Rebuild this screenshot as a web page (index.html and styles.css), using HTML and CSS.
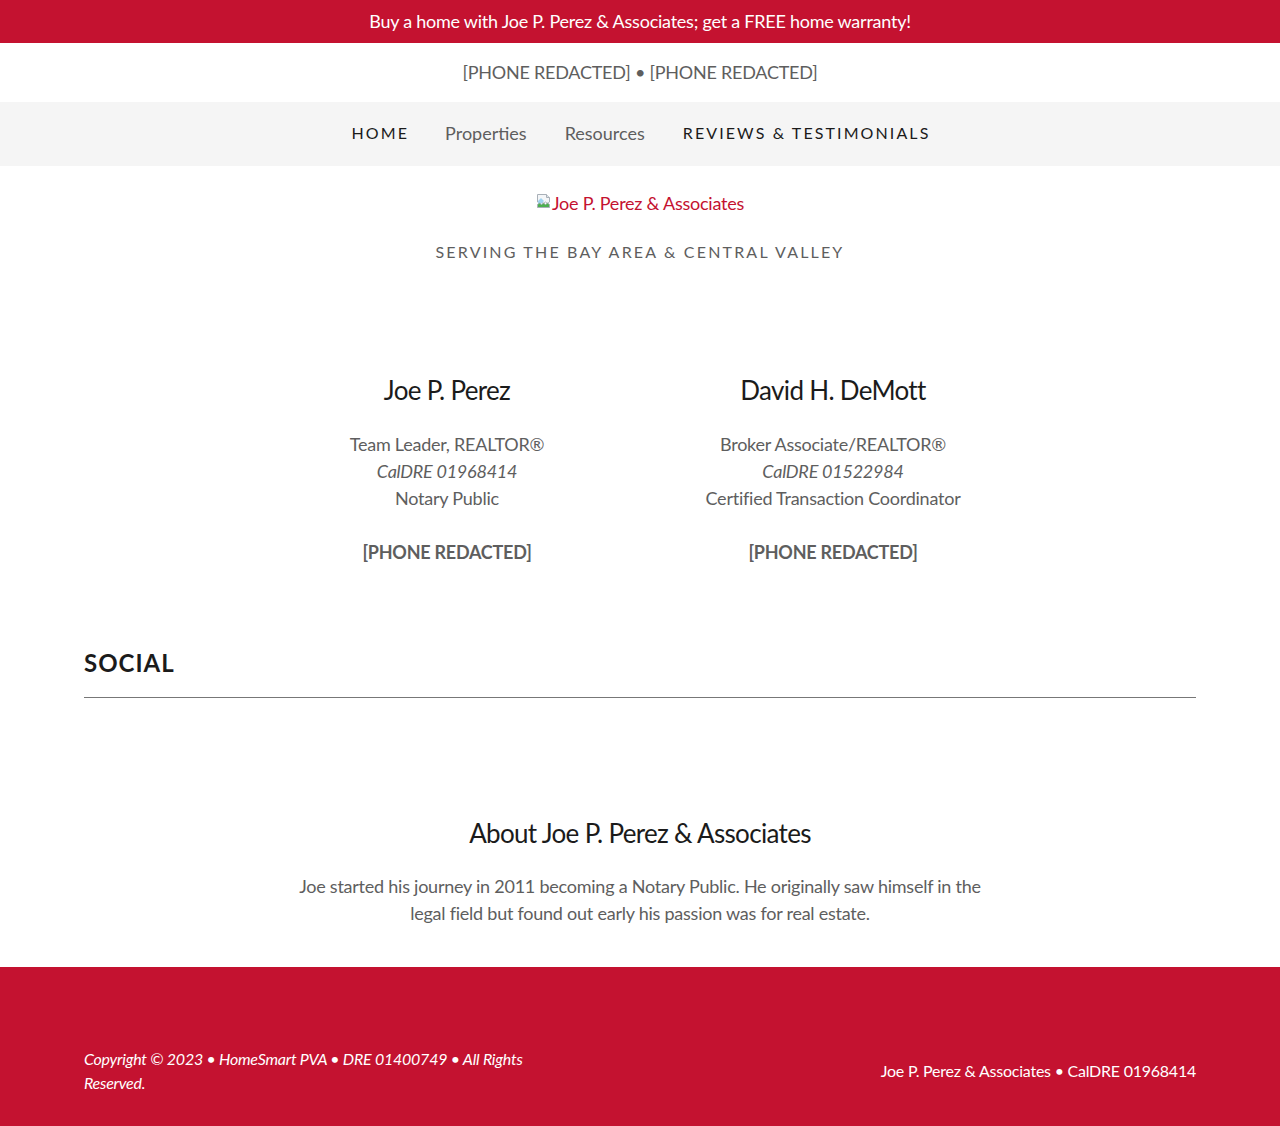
FILE: index.html
```html
<!DOCTYPE html>
<html lang="en">
<head>
<meta charset="utf-8">
<title>Joe P. Perez &amp; Associates</title>
<link rel="stylesheet" href="styles.css">
</head>
<body>
<div class="promo">Buy a home with Joe P. Perez &amp; Associates; get a FREE home warranty!</div>
<div class="phones">[PHONE REDACTED] • [PHONE REDACTED]</div>
<nav class="nav">
  <a class="nav-caps" href="#">HOME</a>
  <a class="nav-plain" href="#">Properties</a>
  <a class="nav-plain" href="#">Resources</a>
  <a class="nav-caps" href="#">REVIEWS &amp; TESTIMONIALS</a>
</nav>
<header class="brand">
  <a class="logo" href="#"><svg class="broken" width="16" height="16" viewBox="0 0 16 16"><path d="M1.5 1.5h9l3 3v4.5l-2 1.5-2-1.5-2 1.5-2-1.5-2 1.5-2-1.5z" fill="#f4f6f8" stroke="#a9b0b8"/><path d="M10.5 1.5v3h3" fill="#dfe3e7" stroke="#a9b0b8"/><path d="M2 8 l3-3 3 3 L2 14z" fill="#9fd3f0"/><path d="M1.5 14.5v-3l2-1.5 2 1.5 2-1.5 2 1.5 2-1.5 2 1.5v3z" fill="#4caf50" stroke="#a9b0b8"/></svg>Joe P. Perez &amp; Associates</a>
  <div class="tagline">SERVING THE BAY AREA &amp; CENTRAL VALLEY</div>
</header>
<section class="team">
  <div class="member">
    <h2 class="member-name">Joe P. Perez</h2>
    <p class="member-info">Team Leader, REALTOR®<br><em>CalDRE 01968414</em><br>Notary Public</p>
    <p class="member-phone">[PHONE REDACTED]</p>
  </div>
  <div class="member">
    <h2 class="member-name">David H. DeMott</h2>
    <p class="member-info">Broker Associate/REALTOR®<br><em>CalDRE 01522984</em><br>Certified Transaction Coordinator</p>
    <p class="member-phone">[PHONE REDACTED]</p>
  </div>
</section>
<section class="social">
  <h2 class="social-title">SOCIAL</h2>
  <hr class="social-rule">
</section>
<section class="about">
  <h2 class="about-title">About Joe P. Perez &amp; Associates</h2>
  <p class="about-text">Joe started his journey in 2011 becoming a Notary Public. He originally saw himself in the legal field but found out early his passion was for real estate.</p>
</section>
<footer class="footer">
  <p class="copyright">Copyright © 2023 • HomeSmart PVA • DRE 01400749 • All Rights Reserved.</p>
  <p class="footer-right">Joe P. Perez &amp; Associates • CalDRE 01968414</p>
</footer>
</body>
</html>
```

FILE: styles.css
```css
* { box-sizing: border-box; }
body {
  margin: 0;
  font-family: Lato, "Liberation Sans", sans-serif;
  color: #5e5e5e;
  background: #fff;
  letter-spacing: -0.015em;
}
a { text-decoration: none; }
.promo {
  background: #c41230;
  color: #fff;
  height: 43px;
  line-height: 42px;
  text-align: center;
  font-size: 18px;
}
.phones {
  height: 59px;
  line-height: 58px;
  text-align: center;
  font-size: 18px;
  color: #5e5e5e;
}
.nav {
  background: #f5f5f5;
  height: 64px;
  display: flex;
  justify-content: center;
  align-items: center;
  gap: 38px;
  padding-bottom: 3px;
}
.nav-caps {
  font-size: 16px;
  letter-spacing: 2.1px;
  color: #1b1b1b;
  margin-right: -2px;
}
.nav-plain {
  font-size: 18px;
  letter-spacing: 0;
  color: #5e5e5e;
}
.brand {
  text-align: center;
  padding-top: 24px;
}
.logo {
  color: #c41230;
  font-size: 18px;
  line-height: 26px;
  display: inline-flex;
  align-items: center;
}
.broken { margin-top: -4px; }
.tagline {
  margin-top: 24px;
  font-size: 16px;
  letter-spacing: 2.18px;
  color: #5e5e5e;
  line-height: 24px;
}
.team {
  display: flex;
  justify-content: center;
  padding-top: 109px;
}
.member {
  width: 386px;
  text-align: center;
}
.member-name {
  margin: 0;
  font-size: 26px;
  font-weight: 400;
  letter-spacing: -0.026em;
  color: #1b1b1b;
  line-height: 34px;
}
.member-info {
  margin: 24px 0 0;
  font-size: 18px;
  line-height: 27px;
}
.member-phone {
  margin: 27px 0 0;
  font-size: 18px;
  line-height: 27px;
  font-weight: 700;
}
.social {
  margin: 82px 84px 0;
}
.social-title {
  margin: 0;
  font-size: 24px;
  font-weight: 700;
  letter-spacing: 1px;
  color: #1b1b1b;
  line-height: 30px;
}
.social-rule {
  margin: 19px 0 0;
  border: 0;
  border-top: 1px solid #777;
}
.about {
  text-align: center;
  padding-top: 118px;
}
.about-title {
  margin: 0;
  font-size: 26px;
  font-weight: 400;
  letter-spacing: -0.026em;
  color: #1b1b1b;
  line-height: 34px;
}
.about-text {
  margin: 23px auto 0;
  width: 700px;
  font-size: 18px;
  line-height: 27px;
}
.footer {
  margin-top: 40px;
  background: #c41230;
  color: #fff;
  height: 159px;
  display: flex;
  justify-content: space-between;
  align-items: center;
  padding: 48px 84px 0;
}
.copyright {
  margin: 0;
  width: 450px;
  font-size: 16px;
  line-height: 24px;
  font-style: italic;
}
.footer-right {
  margin: 0;
  font-size: 16px;
  line-height: 24px;
}
```
